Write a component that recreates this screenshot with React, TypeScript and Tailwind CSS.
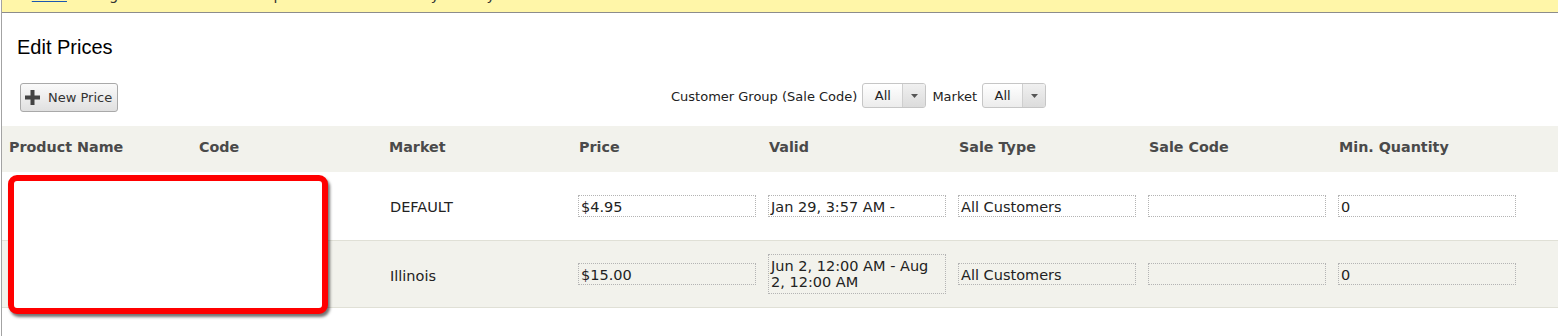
import React from 'react';

const verdana = { fontFamily: '"DejaVu Sans", Verdana, sans-serif' };

const headers = ['Product Name', 'Code', 'Market', 'Price', 'Valid', 'Sale Type', 'Sale Code', 'Min. Quantity'];

type Row = {
  market: string;
  price: string;
  valid: string[];
  saleType: string;
  saleCode: string;
  minQty: string;
  shaded: boolean;
};

const rows: Row[] = [
  { market: 'DEFAULT', price: '$4.95', valid: ['Jan 29, 3:57 AM -'], saleType: 'All Customers', saleCode: '', minQty: '0', shaded: false },
  { market: 'Illinois', price: '$15.00', valid: ['Jun 2, 12:00 AM - Aug', '2, 12:00 AM'], saleType: 'All Customers', saleCode: '', minQty: '0', shaded: true },
];

const Field = ({ lines, tall }: { lines: string[]; tall?: boolean }) => (
  <div
    className={`w-[178px] ${tall ? 'h-[40px] pt-[3px]' : 'h-[22px] flex items-center pt-[1px]'} border border-dotted border-[#b4b4b4] pl-[2px] text-[14.5px] leading-[16px] text-[#222] whitespace-nowrap`}
  >
    <div>
      {lines.map((l, i) => (
        <div key={i}>{l}</div>
      ))}
    </div>
  </div>
);

const Select = () => (
  <div className="w-[64px] h-[25px] flex border border-[#c6c6c6] rounded-[3px] bg-gradient-to-b from-white to-[#ececec] overflow-hidden">
    <div className="flex-1 flex items-center justify-center text-[13px] text-[#222]">All</div>
    <div className="w-[23px] flex items-center justify-center border-l border-[#cfcfcf] bg-gradient-to-b from-[#f0f0f0] to-[#dcdcdc]">
      <svg width="7" height="4" viewBox="0 0 7 4">
        <path d="M0 0 L7 0 L3.5 4 Z" fill="#555" />
      </svg>
    </div>
  </div>
);

const App = () => {
  return (
    <div className="w-[1558px] h-[336px] bg-white overflow-hidden pl-px" style={verdana}>
      <div className="h-full border-l border-[#a3a3a3] relative">
        {/* Notice banner, cut off at top */}
        <div className="h-[13px] bg-[#fff6a8] border-b border-[#8c8c8c] overflow-hidden">
          <div className="-mt-[13px] pl-[13px] text-[14.5px] leading-[16px] text-[#333] whitespace-nowrap">
            ← <span className="underline text-[#1b57b0]">Back</span> Changes made here will be published immediately while you edit.
          </div>
        </div>

        <h1
          className="mt-[22px] pl-[15px] text-[20px] leading-[24px] text-black"
          style={{ fontFamily: '"Liberation Sans", Arial, sans-serif' }}
        >
          Edit Prices
        </h1>

        {/* Toolbar */}
        <div className="mt-[24px] flex items-start pl-[18px]">
          <button className="w-[98px] h-[29px] flex items-center gap-[8px] pl-[4px] border border-[#a9a9a9] rounded-[3px] bg-gradient-to-b from-[#fafafa] to-[#e0e0e0] text-[13px] text-[#333]">
            <svg width="15" height="15" viewBox="0 0 15 15">
              <rect x="5.5" y="0" width="4" height="15" fill="#444" />
              <rect x="0" y="5.5" width="15" height="4" fill="#444" />
            </svg>
            New Price
          </button>
          <div className="ml-[553px] flex items-center gap-[5px] text-[13px] text-[#222]">
            <span className="pt-[3px]">Customer Group (Sale Code)</span>
            <Select />
            <span className="ml-[1px] pt-[3px]">Market</span>
            <Select />
          </div>
        </div>

        {/* Table */}
        <div className="mt-[14px]">
          <div className="h-[46px] bg-[#f2f2ec] flex items-center pl-[6px] pb-[4px]">
            {headers.map((h) => (
              <div key={h} className="w-[190px] pl-[1px] text-[14.3px] leading-[16px] font-bold text-[#4a4a4a]">
                {h}
              </div>
            ))}
          </div>
          {rows.map((r, i) => (
            <div
              key={i}
              className={`h-[68px] flex items-center pl-[6px] ${r.shaded ? 'bg-[#f2f2ec] border-y border-[#e0e0d6]' : 'bg-white'}`}
            >
              <div className="w-[190px]" />
              <div className="w-[190px]" />
              <div className={`w-[190px] pl-[2px] ${r.shaded ? 'pt-[5px]' : 'pt-[4px]'} text-[14.5px] text-[#222]`}>{r.market}</div>
              <div className="w-[190px]"><Field lines={[r.price]} /></div>
              <div className="w-[190px]"><Field lines={r.valid} tall={r.valid.length > 1} /></div>
              <div className="w-[190px]"><Field lines={[r.saleType]} /></div>
              <div className="w-[190px]"><Field lines={[r.saleCode || '\u00a0']} /></div>
              <div className="w-[190px]"><Field lines={[r.minQty]} /></div>
            </div>
          ))}
        </div>

        {/* Redaction box over product name / code */}
        <div className="absolute left-[6px] top-[175px] w-[320px] h-[139px] border-[6px] border-[#ff0000] rounded-[9px] bg-white shadow-[2px_3px_3px_rgba(0,0,0,0.55)]" />
      </div>
    </div>
  );
};

export default App;
